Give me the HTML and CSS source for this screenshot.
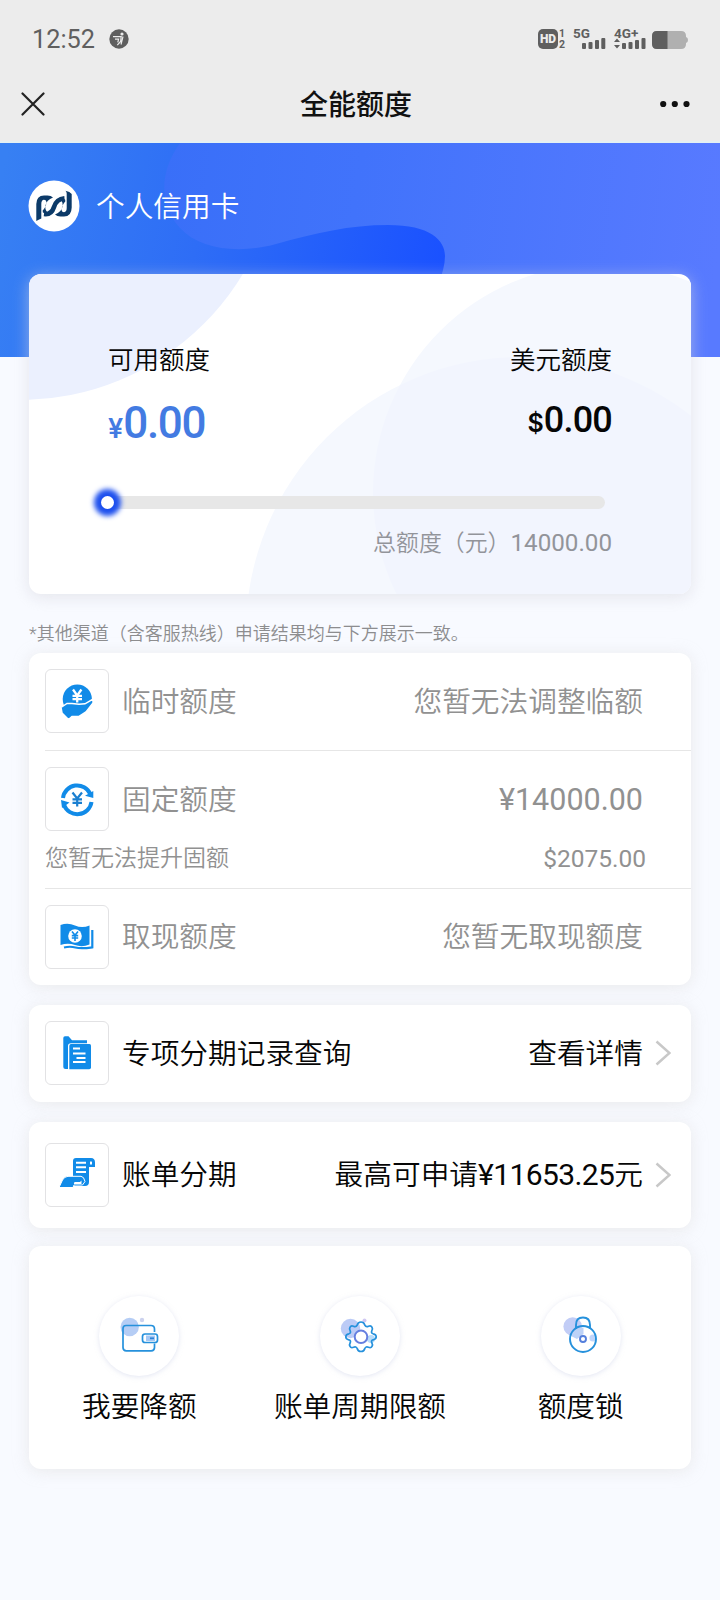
FILE: index.html
```html
<!DOCTYPE html>
<html lang="zh-CN">
<head>
<meta charset="utf-8">
<title>全能额度</title>
<link rel="stylesheet" href="styles.css">
</head>
<body>
<header class="top">
  <div class="status">
    <span class="clock">12:52</span>
    <svg class="runner" width="20" height="20" viewBox="0 0 20 20"><circle cx="10" cy="10" r="9.7" fill="#5f5f5f"/><circle cx="13" cy="5" r="1.6" fill="#ececec"/><path d="M4 7.6H12.2L11.6 12.5L8.3 16.2M6 10.2H9.6L8.8 13.4M14 7.5L12 15.5" fill="none" stroke="#ececec" stroke-width="1.2"/></svg>
    <div class="signals">
      <div class="hd-wrap"><span class="hd">HD</span><span class="sims"><i>1</i><i>2</i></span></div>
      <div class="net net-a"><b>5G</b><svg width="24" height="12" viewBox="0 0 24 12" fill="#5f5f5f"><rect y="6" width="4" height="6" rx="1"/><rect x="6.5" y="5" width="4" height="7" rx="1"/><rect x="13" y="3" width="4" height="9" rx="1"/><rect x="19.3" y="1" width="4" height="11" rx="1"/></svg></div>
      <div class="net net-b"><b>4G+</b><svg width="32" height="12" viewBox="0 0 32 12" fill="#5f5f5f"><path d="M0 5L3 1.5L6 5ZM0 8L3 11.5L6 8Z"/><rect x="8" y="6" width="4" height="6" rx="1"/><rect x="14.5" y="5" width="4" height="7" rx="1"/><rect x="21" y="3" width="4" height="9" rx="1"/><rect x="27.5" y="1" width="4" height="11" rx="1"/></svg></div>
      <svg class="battery" width="36" height="18" viewBox="0 0 36 18"><path d="M5 0H29Q34 0 34 5V6Q36 6.500 36 9T34 12V13Q34 18 29 18H5Q0 18 0 13V5Q0 0 5 0Z" fill="#b0b0b0"/><path d="M5 0H15.500V18H5Q0 18 0 13V5Q0 0 5 0Z" fill="#5f5f5f"/></svg>
    </div>
  </div>
  <nav class="nav">
    <svg width="24" height="24" viewBox="0 0 24 24"><path d="M1.500 1.500L22.500 22.500M22.500 1.500L1.500 22.500" stroke="#222" stroke-width="2.200" stroke-linecap="round"/></svg>
    <h1 class="title">全能额度</h1>
    <svg width="30" height="8" viewBox="0 0 30 8" fill="#111"><circle cx="3.200" cy="4" r="3.100"/><circle cx="14.800" cy="4" r="3.100"/><circle cx="26.500" cy="4" r="3.100"/></svg>
  </nav>
</header>

<section class="hero">
  <svg class="hero-art" width="720" height="214" viewBox="0 0 720 214">
    <defs>
      <linearGradient id="base" gradientUnits="userSpaceOnUse" x1="0" y1="40" x2="445" y2="130"><stop offset="0" stop-color="#3780f3"/><stop offset=".45" stop-color="#2e6df6"/><stop offset="1" stop-color="#1a51ff"/></linearGradient>
      <linearGradient id="wave" gradientUnits="userSpaceOnUse" x1="160" y1="30" x2="720" y2="100"><stop offset="0" stop-color="#396ff8"/><stop offset=".35" stop-color="#4173fb"/><stop offset="1" stop-color="#587aff"/></linearGradient>
    </defs>
    <rect width="720" height="214" fill="url(#base)"/>
    <path d="M180 0C160 28 158 60 180 85C200 107 240 111 276 101C315 90 350 82 388 82C430 82 445 97 445 113C445 122 442 131 439 140L430 214H720V0Z" fill="url(#wave)"/>
  </svg>
  <div class="brand">
    <svg width="52" height="52" viewBox="0 0 52 52"><circle cx="26" cy="26" r="25.500" fill="#fff"/><path d="M8.300 24Q8.500 15.500 16 15.500H19.500Q23 15.500 25 17.500Q18.500 20 17.500 25.500Q16.500 30 20.500 33.500Q17 34.500 14.800 32.300Q14 30.500 16 29Q18.500 26 18.500 22Q18 19.800 16 19.800Q13.300 20 13.300 24V38.500Q10.500 39.500 8.300 41Z" fill="#0c3a68"/><path d="M43.700 27.500Q43.500 36.500 36 36.500H32.500Q29 36.500 27 34.500Q33.500 32 34.500 26.500Q35.500 22 31.500 18.500Q35 17.500 37.200 19.700Q38 21.500 36 23Q33.500 26 33.500 30Q34 32.200 36 32.200Q38.700 32 38.700 28V13.500Q38.700 12 37.500 10.800Q42 11.500 43.700 14Z" fill="#0c3a68"/><path d="M16 34Q23.500 35 26 27T36.500 18.300" fill="none" stroke="#0c3a68" stroke-width="4.600"/></svg>
    <span>个人信用卡</span>
  </div>
</section>

<main class="page">
  <section class="card quota">
    <svg class="quota-art" width="662" height="320" viewBox="29 274 662 320"><defs><clipPath id="disc-a"><circle cx="602" cy="493" r="229"/></clipPath></defs><circle cx="20" cy="140" r="260" fill="#ebf0fe"/><circle cx="602" cy="493" r="229" fill="#f5f8fe"/><circle cx="521" cy="632" r="275" fill="#f5f8fe"/><circle cx="521" cy="632" r="275" fill="#f2f5fe" clip-path="url(#disc-a)"/></svg>
    <div class="quota-body">
      <div class="amounts">
        <div>
          <div class="cap">可用额度</div>
          <div class="cny"><small>¥</small>0.00</div>
        </div>
        <div class="right">
          <div class="cap">美元额度</div>
          <div class="usd"><small>$</small>0.00</div>
        </div>
      </div>
      <div class="slider"><span class="thumb"></span></div>
      <div class="total">总额度（元）<span class="total-num">14000.00</span></div>
    </div>
  </section>

  <p class="note">*其他渠道（含客服热线）申请结果均与下方展示一致。</p>

  <section class="card list muted">
    <div class="row first">
      <span class="box"><svg width="36" height="36" viewBox="0 0 36 36"><circle cx="18.300" cy="16" r="14.600" fill="#118be8"/><path d="M2 24.500L8 20.500H13L20 21.300L26 20.800L34 16V20L27 29L20 33.500H13L9.500 36.500L3 30Z" fill="#118be8" stroke="#fff" stroke-width="1.500"/><path d="M14 6.500L18.200 12.500L22.400 6.500M18.200 12.500V19.500M13.500 12.800H23M13.500 16.200H23" fill="none" stroke="#fff" stroke-width="2.300"/></svg></span>
      <span class="name">临时额度</span>
      <span class="value">您暂无法调整临额</span>
    </div>
    <div class="group">
      <div class="row plain">
        <span class="box"><svg width="36" height="36" viewBox="0 0 36 36"><g fill="none" stroke="#118be8" stroke-width="4"><path d="M4 17A14.300 14.300 0 0 1 31.300 13"/><path d="M32.500 21A14.300 14.300 0 0 1 5 24"/></g><path d="M34.300 10V17L26 14.800ZM2 19L10.500 21.500L3 27Z" fill="#118be8"/><path d="M13.500 11.500L18.200 17.500L23 11.500M18.200 17.500V25.500M13.500 18.300H23M13.500 21.800H23" fill="none" stroke="#1b7fd0" stroke-width="2.200"/></svg></span>
        <span class="name">固定额度</span>
        <span class="value num">¥14000.00</span>
      </div>
      <div class="sub"><span>您暂无法提升固额</span><span class="sub-num">$2075.00</span></div>
    </div>
    <div class="row last">
      <span class="box"><svg width="36" height="36" viewBox="0 0 36 36"><path d="M1.500 6Q9 3.500 16 6.500T30.500 6.500V25.500Q23 28.500 16 26T1.500 26Z" fill="#118be8"/><path d="M5 28.500Q11 27 16.500 28.500T33.300 28.300V11" fill="none" stroke="#118be8" stroke-width="2.200"/><circle cx="16" cy="17" r="6.800" fill="#fff"/><path d="M13 12.500L16 16.200L19 12.500M16 16V22M12.800 16.600H19.200M12.800 19H19.200" fill="none" stroke="#118be8" stroke-width="1.600"/></svg></span>
      <span class="name">取现额度</span>
      <span class="value">您暂无取现额度</span>
    </div>
  </section>

  <section class="card records">
    <div class="row last">
      <span class="box"><svg width="36" height="36" viewBox="0 0 36 36"><path d="M4.300 3Q4.300 1.300 6 1.300H9.500L13 5.300H28V8.300H12Q9 8.300 9 11V34H6.500Q4.300 34 4.300 32Z" fill="#118be8"/><path d="M12 9H30.500Q32 9 32 10.500V32.500Q32 34.300 30.200 34.300H10.300V11Q10.300 9 12 9Z" fill="#118be8"/><path d="M14 13.500H21M14 18.500H26.500M17.500 23H26.500M14 27H26.500" stroke="#fff" stroke-width="2"/></svg></span>
      <span class="name">专项分期记录查询</span>
      <span class="value">查看详情</span>
      <svg class="chev" width="16" height="26" viewBox="0 0 16 26"><path d="M1.500 1.500L14.500 13L1.500 24.500" fill="none" stroke="#c8c8c8" stroke-width="2.500"/></svg>
    </div>
  </section>

  <section class="card bill">
    <div class="row last">
      <span class="box"><svg width="36" height="36" viewBox="0 0 36 36"><path d="M14 4Q14 1 17 1H32Q36 1 36 5.500V10H30V25Q30 29 26 29H14Z" fill="#118be8"/><path d="M31 7.500V5Q31.800 3.500 33 5V7.500Z" fill="#fff"/><path d="M17 5.800H27M17 10.300H27M17 15H27" stroke="#fff" stroke-width="2"/><path d="M0 30.500L3.500 23Q5.500 19.500 9 19.300H22Q25 19.500 26 24.500L23.500 28H15L14 30.500Z" fill="#118be8" stroke="#fff" stroke-width="1"/><path d="M15.500 25H21L22.500 23.500V27H14.800Z" fill="#fff"/></svg></span>
      <span class="name">账单分期</span>
      <span class="value">最高可申请<span class="apply-num">¥11653.25</span>元</span>
      <svg class="chev" width="16" height="26" viewBox="0 0 16 26"><path d="M1.500 1.500L14.500 13L1.500 24.500" fill="none" stroke="#c8c8c8" stroke-width="2.500"/></svg>
    </div>
  </section>

  <section class="card actions">
    <div class="action">
      <span class="disc"><svg width="44" height="44" viewBox="0 0 44 44"><circle cx="12.700" cy="11" r="9.200" fill="#b5cdf5"/><circle cx="25" cy="4" r="2.200" fill="#ccd2ee"/><path d="M37.500 16V13Q37.500 9.500 34 9.500H9Q6 9.500 6 12.500V31.500Q6 34.800 9.300 34.800H34.200Q37.500 34.800 37.500 31.500V27.500" fill="none" stroke="#2691dc" stroke-width="1.700"/><rect x="25.500" y="18" width="15" height="8.500" rx="2.500" fill="#fff" stroke="#2691dc" stroke-width="1.700"/><rect x="29" y="19.500" width="9" height="5.500" fill="#a5c8f5"/><path d="M33 22.300H37" stroke="#2b83d8" stroke-width="1.800"/></svg></span>
      <span class="label">我要降额</span>
    </div>
    <div class="action">
      <span class="disc"><svg width="44" height="44" viewBox="0 0 44 44"><circle cx="12.500" cy="12.500" r="9.700" fill="#bccbf6"/><circle cx="26.500" cy="4.500" r="2" fill="#d0c8f2"/><circle cx="33" cy="23" r="4" fill="#b9dcfa"/><path d="M19.200 9.200Q19.800 6 23 6T26.800 9.200Q28 11.500 30.500 10.300Q33 9.300 34 11.300Q35 13 33.800 14.800Q32.800 17.200 35.200 17.800Q38.200 18.300 38.200 20.800T35.200 23.800Q32.800 24.500 33.800 26.800Q35 28.800 34 30.300Q33 32.300 30.500 31.300Q28 30 26.800 32.500Q26.200 35.500 23 35.500T19.200 32.500Q18 30 15.500 31.300Q13 32.300 12 30.300Q11 28.800 12.200 26.800Q13.200 24.500 10.800 23.800Q7.800 23.300 7.800 20.800T10.800 17.800Q13.200 17.200 12.200 14.800Q11 13 12 11.300Q13 9.300 15.500 10.300Q18 11.500 19.200 9.200Z" fill="none" stroke="#2691dc" stroke-width="1.700"/><circle cx="23" cy="20.800" r="6.300" fill="#fff" stroke="#667fe0" stroke-width="2"/></svg></span>
      <span class="label">账单周期限额</span>
    </div>
    <div class="action">
      <span class="disc"><svg width="44" height="44" viewBox="0 0 44 44"><circle cx="13.700" cy="10.500" r="9.300" fill="#c2cdf6"/><path d="M12 20Q15 12 24.500 11.500V18L18 23Z" fill="#bdd2f7"/><circle cx="34" cy="22" r="3.600" fill="#c0d5fa"/><path d="M17 13V9Q17 1.500 24 1.500T31 9V13" fill="none" stroke="#2691dc" stroke-width="1.900"/><circle cx="24" cy="23" r="13" fill="none" stroke="#2691dc" stroke-width="1.900"/><circle cx="24" cy="23" r="3" fill="#fff" stroke="#547fdc" stroke-width="1.900"/></svg></span>
      <span class="label">额度锁</span>
    </div>
  </section>
</main>
</body>
</html>
```
FILE: styles.css
```css
* { box-sizing: border-box; }
body {
  margin: 0;
  width: 720px;
  min-height: 1600px;
  background: #f8faff;
  color: #060606;
  font-family: Roboto, "Noto Sans CJK SC", sans-serif;
  font-weight: 350;
}
svg { display: block; flex: none; }

.top { height: 143px; background: #ececec; border-bottom: 2px solid #e4f0f3; }
.status { height: 76px; padding: 1px 32px 0; display: flex; align-items: center; color: #5f5f5f; }
.clock { width: 77px; padding-top: 2px; font-size: 25.300px; font-weight: 400; }
.signals { margin-left: auto; height: 20px; display: flex; }
.hd-wrap { display: flex; width: 35px; gap: 1px; }
.hd {
  width: 20px; height: 20px; border-radius: 5px; background: #5f5f5f; color: #ececec;
  font: 900 12px/20px Roboto, sans-serif; text-align: center;
}
.sims { display: flex; flex-direction: column; justify-content: space-between; height: 22px; margin: -1px 0; }
.sims i { font: 700 10.500px/11px Roboto, sans-serif; }
.net { display: flex; flex-direction: column; justify-content: space-between; }
.net b { font: 700 13.500px/9px Roboto, sans-serif; height: 8px; }
.net-a { width: 41px; }
.net-a svg { margin-left: 9px; }
.net-b { width: 38px; }
.battery { margin: 2px 0 0; }
.nav { height: 56px; padding: 0 30px 0 21px; display: flex; align-items: center; justify-content: space-between; }
.nav svg { margin-bottom: 1px; }
.title { margin: 4px 0 0 7px; font-size: 28px; line-height: 40px; font-weight: 500; color: #111; }

.hero { position: relative; height: 214px; }
.hero-art { position: absolute; left: 0; top: 0; }
.brand { position: relative; display: flex; align-items: center; gap: 16px; padding: 37px 0 0 28px; color: #fff; font-size: 28.700px; line-height: 50px; }
.brand span { padding-top: 1px; }

.page { position: relative; margin-top: -83px; padding: 0 29px; }
.card { border-radius: 12px; background: #fff; box-shadow: 0 2px 16px rgba(226, 226, 226, .7); }
.quota { position: relative; height: 320px; box-shadow: 0 3px 16px rgba(215, 215, 222, .6); }
.quota-art { position: absolute; left: 0; top: 0; border-radius: 12px; }
.quota-body { position: relative; padding: 68px 79px 0; }
.amounts { display: flex; justify-content: space-between; height: 149px; }
.right { text-align: right; }
.cap { font-size: 25.500px; line-height: 36px; }
.cny { margin-top: 20px; font-size: 44px; line-height: 50px; font-weight: 500; color: #437be2; letter-spacing: -1.300px; }
.cny small { font: 600 27px/1 Inter, sans-serif; letter-spacing: 0; }
.usd { margin-top: 17px; font-size: 36px; line-height: 50px; font-weight: 500; letter-spacing: -.8px; }
.usd small { font: 600 25px/1 Inter, sans-serif; letter-spacing: 0; }
.slider { position: relative; margin-top: 5px; margin-right: 7px; height: 13px; border-radius: 7px; background: #e7e7e7; }
.thumb { position: absolute; left: -7px; top: 0; width: 13px; height: 13px; border-radius: 50%; background: #fff; box-shadow: 0 0 5px 7px #1e50ee; }
.total { margin-top: 17px; text-align: right; font-size: 22.900px; line-height: 34px; color: #92949a; white-space: nowrap; }
.total-num { font-size: 24.200px; font-weight: 400; }

.note { margin: 0; padding-top: 27px; height: 59px; font-size: 18px; line-height: 26px; color: #8d8d8f; white-space: nowrap; }

.list { padding-left: 16px; height: 332px; }
.muted { color: #919191; }
.row { display: flex; align-items: center; height: 97px; padding-right: 48px; border-bottom: 1px solid #e6e6e6; font-size: 28.700px; line-height: 40px; }
.first { height: 98px; padding-bottom: 1px; }
.box { width: 64px; height: 64px; flex: none; display: flex; align-items: center; justify-content: center; border: 1px solid #e2e2e4; border-radius: 6px; }
.name { margin-left: 13px; padding-top: 1px; }
.value { margin-left: auto; padding-top: 1px; white-space: nowrap; }
.num { font-size: 30.500px; padding-top: 1px; font-weight: 400; }
.plain, .last { border-bottom: 0; }
.group { height: 138px; border-bottom: 1px solid #e6e6e6; }
.group .row { height: 96px; }
.list .last { height: 95px; }
.sub { display: flex; justify-content: space-between; margin-top: -5px; padding-right: 45px; font-size: 23px; line-height: 34px; }
.sub-num { font-size: 24.500px; font-weight: 400; }
.records { margin-top: 20px; height: 97px; padding-left: 16px; }
.records .row { height: 96px; }
.records .row, .bill .row { padding-right: 20px; }
.records .value, .bill .value { margin-right: -1px; }
.chev { margin-left: 13px; }
.bill { margin-top: 20px; height: 106px; padding: 4px 0 0 16px; }
.apply-num { font-size: 30px; font-weight: 400; letter-spacing: -.6px; }

.actions { margin-top: 18px; height: 223px; padding: 50px 0 0; display: flex; justify-content: center; }
.action { width: 221px; display: flex; flex-direction: column; align-items: center; font-size: 28.700px; }
.disc { width: 80px; height: 80px; padding-top: 4px; border-radius: 50%; background: #fff; box-shadow: 0 1px 5px rgba(200, 205, 230, .5); display: flex; align-items: center; justify-content: center; }
.label { margin-top: 10px; line-height: 42px; white-space: nowrap; }
```
